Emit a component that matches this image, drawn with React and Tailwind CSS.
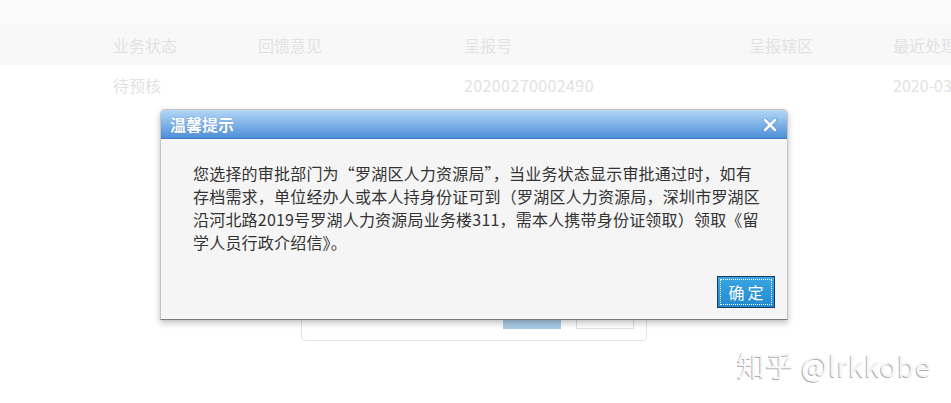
export default function App() {
  const cjk = "font-['Noto_Sans_CJK_SC','Noto_Sans',sans-serif]";
  return (
    <div className={`relative w-[951px] h-[403px] overflow-hidden bg-white ${cjk}`}>
      {/* background table */}
      <div className="h-[25px] bg-[#fbfbfb]" />
      <div className="flex h-[40px] items-center bg-[#f8f8f8] pl-[113px] text-[16px] text-[#e2e2e2]">
        <div className="w-[145px] shrink-0">业务状态</div>
        <div className="w-[206px] shrink-0">回馈意见</div>
        <div className="w-[285px] shrink-0">呈报号</div>
        <div className="w-[144px] shrink-0">呈报辖区</div>
        <div className="whitespace-nowrap">最近处理</div>
      </div>
      <div className="flex h-[40px] items-center bg-white pl-[113px] text-[16px] text-[#e2e2e2]">
        <div className="w-[145px] shrink-0">待预核</div>
        <div className="w-[206px] shrink-0"></div>
        <div className="w-[285px] shrink-0 tracking-[0.4px]">20200270002490</div>
        <div className="w-[144px] shrink-0"></div>
        <div className="whitespace-nowrap">2020-03-</div>
      </div>

      {/* panel behind */}
      <div className="absolute left-[301px] top-[290px] w-[346px] h-[51px] rounded-b-[4px] border border-[#e6e6e6] bg-white">
        <div className="absolute left-[201px] top-[18px] h-[20px] w-[58px] bg-[#a9cbe6]" />
        <div className="absolute left-[274px] top-[18px] h-[20px] w-[58px] border border-[#e0e0e0] bg-white" />
      </div>

      {/* dialog */}
      <div className="absolute left-[160px] top-[109px] w-[628px] h-[211px] rounded-t-[5px] border border-[#c4c4c4] border-b-[#7a7a7a] bg-[#f5f5f5] shadow-[0_3px_6px_rgba(0,0,0,0.25)] flex flex-col">
        <div className="flex h-[29px] items-center justify-between rounded-t-[4px] border-b border-[#3f7cc0] bg-gradient-to-b from-[#b2d7f6] to-[#4d8fd7] pl-[9px] pr-[9px]">
          <span className="text-[16px] font-bold text-white [text-shadow:0_0_1px_rgba(40,90,160,0.6)]">温馨提示</span>
          <svg width="16" height="16" viewBox="0 0 16 16" className="mt-[1px]">
            <path d="M3 3 L13 13 M13 3 L3 13" stroke="#3f7cc0" strokeWidth="4" strokeLinecap="round" opacity="0.5" />
            <path d="M3 3 L13 13 M13 3 L3 13" stroke="#ffffff" strokeWidth="2.6" strokeLinecap="round" />
          </svg>
        </div>
        <div className="flex-1 flex flex-col pl-[32px] pr-[12px] pt-[23px]">
          <div className="text-[16px] leading-[23px] text-[#333333] tracking-[0.2px]">
            <div className="whitespace-nowrap">您选择的审批部门为“罗湖区人力资源局”，当业务状态显示审批通过时，如有</div>
            <div className="whitespace-nowrap">存档需求，单位经办人或本人持身份证可到（罗湖区人力资源局，深圳市罗湖区</div>
            <div className="whitespace-nowrap">沿河北路2019号罗湖人力资源局业务楼311，需本人携带身份证领取）领取《留</div>
            <div className="whitespace-nowrap">学人员行政介绍信》。</div>
          </div>
          <div className="mt-auto mb-[11px] flex justify-end">
            <button className="flex h-[32px] w-[58px] items-center justify-center border border-[#1c3a58] bg-gradient-to-b from-[#3aa6e2] to-[#1f8ad0] p-[2px]">
              <span className="flex h-full w-full items-center justify-center border border-dotted border-white text-[16px] tracking-[3px] pl-[3px] text-white">确定</span>
            </button>
          </div>
        </div>
      </div>

      {/* watermark */}
      <div className="absolute left-[737px] top-[344px] whitespace-nowrap text-[28px] tracking-[0.6px] text-[#f7f7f7] [text-shadow:-1px_1px_0_#b0b0b0]">
        知乎 @lrkkobe
      </div>
    </div>
  );
}
